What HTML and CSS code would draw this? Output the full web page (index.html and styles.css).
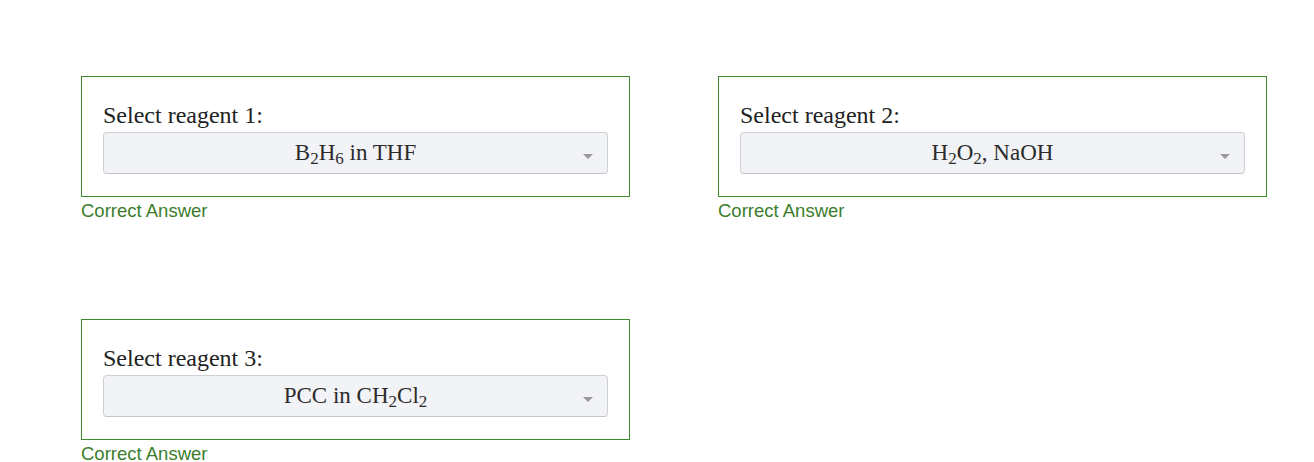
FILE: index.html
```html
<!DOCTYPE html>
<html>
<head>
<meta charset="utf-8">
<link rel="stylesheet" href="styles.css">
</head>
<body>
<div class="grid">
  <div class="cell">
    <div class="box">
      <div class="label">Select reagent 1:</div>
      <div class="select">
        <span class="value">B<sub>2</sub>H<sub>6</sub> in THF</span>
        <span class="caret"></span>
      </div>
    </div>
    <div class="answer">Correct Answer</div>
  </div>
  <div class="cell">
    <div class="box">
      <div class="label">Select reagent 2:</div>
      <div class="select">
        <span class="value">H<sub>2</sub>O<sub>2</sub>, NaOH</span>
        <span class="caret"></span>
      </div>
    </div>
    <div class="answer">Correct Answer</div>
  </div>
  <div class="cell">
    <div class="box">
      <div class="label">Select reagent 3:</div>
      <div class="select">
        <span class="value">PCC in CH<sub>2</sub>Cl<sub>2</sub></span>
        <span class="caret"></span>
      </div>
    </div>
    <div class="answer">Correct Answer</div>
  </div>
</div>
</body>
</html>
```
FILE: styles.css
```css
html, body {
  margin: 0;
  padding: 0;
  background: #ffffff;
}
body {
  font-family: "Liberation Serif", "Times New Roman", serif;
  color: #222222;
}
.grid {
  display: grid;
  grid-template-columns: 549px 549px;
  column-gap: 88px;
  row-gap: 98px;
  padding: 76px 0 0 81px;
}
.box {
  border: 1px solid #3d8a2f;
  padding: 22px 21px 22px 21px;
}
.label {
  font-size: 24px;
  line-height: 33px;
  color: #222222;
}
.select {
  position: relative;
  height: 40px;
  border: 1px solid #cfd0d4;
  border-bottom-color: #c4c5ca;
  border-radius: 4px;
  background: #f2f3f7;
  display: flex;
  align-items: center;
  justify-content: center;
}
.value {
  font-size: 23px;
  line-height: 26px;
  color: #2b2b2b;
}
.value sub {
  font-size: 0.74em;
  line-height: 0;
  vertical-align: -0.22em;
}
.caret {
  position: absolute;
  right: 14px;
  top: 21px;
  width: 0;
  height: 0;
  border-left: 5px solid transparent;
  border-right: 5px solid transparent;
  border-top: 5px solid #9a9a9a;
}
.answer {
  margin-top: 3px;
  font-family: "Liberation Sans", Arial, sans-serif;
  font-size: 18.5px;
  line-height: 21px;
  color: #3b7d2b;
}
```
